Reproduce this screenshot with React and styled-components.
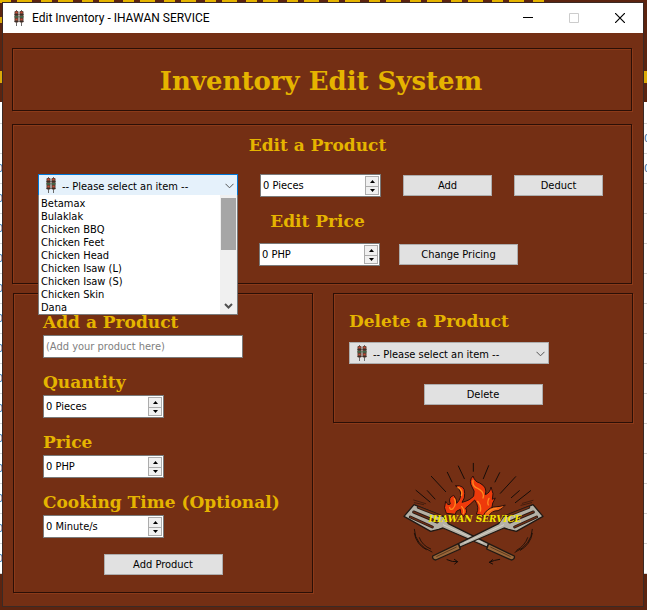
import React, { useState } from "react";
import styled, { createGlobalStyle, css } from "styled-components";

const uiFont = `Tahoma, "DejaVu Sans Condensed", "DejaVu Sans", sans-serif`;
const slabFont = `Rockwell, "DejaVu Serif", serif`;

const Global = createGlobalStyle`
  *, *::before, *::after { box-sizing: border-box; }
  body { margin: 0; background: #5c2410; font-family: ${uiFont}; font-size: 11px; color: #000; }
`;

const Desktop = styled.div`
  position: relative;
  min-height: 100vh;
  padding: 2px 3px 3px 2px;
  overflow: hidden;
`;

const Backdrop = styled.div`
  position: absolute;
  inset: 0;
`;

const BackdropHeader = styled.div`
  height: 102px;
  display: flex;
  flex-direction: column;
`;

const BackdropBanner = styled.div`
  height: 3px;
  margin-right: 100px;
  background: repeating-linear-gradient(90deg, #e5b400 0 11px, #5c2410 11px 17px, #e5b400 17px 32px, #5c2410 32px 41px);
`;

const BackdropMarks = styled.div`
  display: flex;
  justify-content: space-between;
  height: ${(p) => p.$h}px;
  margin-top: ${(p) => p.$gap}px;
`;

const BackdropMark = styled.span`
  width: 3px;
  background: #dba908;
`;

const BackdropRow = styled.div`
  display: flex;
  justify-content: space-between;
  height: ${(p) => (p.$tall ? 22 : 30)}px;
  background: #fff;
  border-bottom: 1px solid #d4d4d4;
  line-height: 30px;
  color: #3c6e9c;
`;

const BackdropCell = styled.span`
  width: 3px;
  overflow: hidden;
  display: flex;
  justify-content: ${(p) => (p.$end ? "flex-end" : "flex-start")};
`;

const Window = styled.main`
  position: relative;
  border: 1px solid #3b2a25;
  background: #742f14;
`;

const TitleBar = styled.header`
  display: flex;
  align-items: center;
  height: 30px;
  padding-left: 10px;
  background: #fff;
`;

const WindowTitle = styled.h1`
  flex: 1;
  margin: 0 0 0 7px;
  font: 400 12px/16px "Segoe UI", Roboto, sans-serif;
`;

const CaptionButton = styled.button`
  display: grid;
  place-items: center;
  width: 46px;
  height: 30px;
  padding: 0;
  border: 0;
  background: none;
  color: ${(p) => (p.disabled ? "#ccc" : "#000")};
`;

const Body = styled.div`
  padding: 15px 11px 13px 9px;
`;

const Group = styled.section`
  border: 1px solid #2b0f06;
  box-shadow: 1px 1px 0 #8b3a19, inset 1px 1px 0 #8b3a19;
`;

const Banner = styled(Group)`
  padding: 15px 14px 12px;
`;

const BannerTitle = styled.h2`
  margin: 0;
  padding-right: 2px;
  font: 700 26px/34px ${slabFont};
  color: #e5b400;
  text-align: center;
`;

const EditGroup = styled(Group)`
  margin-top: 13px;
  padding: 10px 10px 17px 25px;
`;

const heading = css`
  display: block;
  margin: 0;
  font: 700 17px/20px ${slabFont};
  color: #e5b400;
`;

const GroupTitle = styled.h3`
  ${heading}
`;

const CenteredTitle = styled(GroupTitle)`
  padding-right: 24px;
  text-align: center;
`;

const ControlRow = styled.div`
  display: flex;
  align-items: center;
  gap: 22px;
  margin: 19px 0 14px;
`;

const PriceRow = styled.div`
  display: flex;
  align-items: center;
  gap: 19px;
  margin-top: 12px;
  padding-left: 221px;
`;

const Columns = styled.div`
  display: grid;
  grid-template-columns: 1fr 1fr;
  gap: 20px;
  margin: 9px -1px 0 1px;
`;

const AddGroup = styled(Group)`
  display: flex;
  flex-direction: column;
  gap: 13px;
  padding: 17px 29px;
`;

const Field = styled.div`
  display: flex;
  flex-direction: column;
  gap: 2px;
`;

const FieldLabel = styled.label`
  ${heading}
  line-height: 22px;
  white-space: nowrap;
`;

const TextInput = styled.input`
  width: 200px;
  height: 23px;
  padding: 0 2px;
  border: 1px solid #7a7a7a;
  background: #fff;
  font: 11px ${uiFont};
  &::placeholder { color: #808080; opacity: 1; }
`;

const PushButton = styled.button`
  width: ${(p) => (p.$wide ? 119 : 89)}px;
  height: 21px;
  padding: 0;
  border: 1px solid #adadad;
  background: #e1e1e1;
  font: 11px ${uiFont};
  color: #000;
`;

const CenteredButton = styled(PushButton)`
  align-self: center;
  margin-top: ${(p) => p.$gap}px;
`;

const SpinFrame = styled.div`
  display: flex;
  width: 121px;
  height: 23px;
  padding: 1px;
  border: 1px solid #7a7a7a;
  background: #fff;
`;

const SpinInput = styled.input`
  flex: 1;
  min-width: 0;
  padding: 0 1px;
  border: 0;
  background: none;
  font: 11px ${uiFont};
`;

const SpinButtons = styled.div`
  display: grid;
  grid-template-rows: 1fr 1fr;
  width: 14px;
  border: 1px solid #acacac;
`;

const SpinButton = styled.button`
  display: grid;
  place-items: center;
  min-height: 0;
  padding: 0;
  border: 0;
  background: #f0f0f0;
  & + & { border-top: 1px solid #acacac; }
`;

const Combo = styled.div`
  position: relative;
  align-self: flex-start;
  width: 200px;
  height: 22px;
`;

const ComboSelect = styled.select`
  appearance: none;
  width: 100%;
  height: 100%;
  padding: 2px 20px 0 23px;
  border: 1px solid ${(p) => (p.$open ? "#0078d7" : "#adadad")};
  border-radius: 0;
  background: ${(p) => (p.$open ? "#e5f1fb" : "#e1e1e1")};
  font: 11px ${uiFont};
  color: #000;
`;

const ComboIcon = styled.span`
  position: absolute;
  top: 3px;
  left: 7px;
  display: flex;
  pointer-events: none;
`;

const ComboArrow = styled.svg`
  position: absolute;
  top: 9px;
  right: 4px;
  pointer-events: none;
`;

const Popup = styled.div`
  position: absolute;
  z-index: 2;
  top: 21px;
  left: 0;
  right: 0;
  display: flex;
  border: 1px solid #7a7a7a;
  border-top: 0;
  background: #fff;
`;

const Options = styled.ul`
  flex: 1;
  margin: 0;
  padding: 2px 2px 0;
  list-style: none;
`;

const Option = styled.li`
  line-height: 13px;
`;

const ScrollTrack = styled.div`
  display: flex;
  flex-direction: column;
  justify-content: space-between;
  align-items: center;
  width: 17px;
  padding: 3px 1px 5px;
  background: #f0f0f0;
`;

const ScrollThumb = styled.div`
  width: 15px;
  height: 52px;
  background: #a6a6a6;
`;

const SideColumn = styled.div`
  display: flex;
  flex-direction: column;
`;

const DeleteGroup = styled(Group)`
  display: flex;
  flex-direction: column;
  gap: 11px;
  padding: 17px 15px;
`;

const LogoHolder = styled.div`
  display: flex;
  justify-content: center;
  padding: 27px 20px 0 0;
`;

const SkewerIcon = () => (
  <svg width="12" height="17" viewBox="0 0 12 17" aria-hidden="true">
    {[3, 8].map((x) => (
      <g key={x}>
        <path d={`M${x + 0.5} 0V16`} stroke="#6b6b6b" strokeWidth="1" />
        <rect x={x - 1.5} y="1" width="4" height="11.500" rx="1" fill="#5c4034" />
        <path d={`M${x - 0.5} 2.500h2M${x - 0.5} 9.500h2`} stroke="#cf4a35" strokeWidth="1.5" />
        <path d={`M${x - 1.5} 4.500h4M${x - 1.5} 11.500h4`} stroke="#3a2d28" strokeWidth="1" />
        <path d={`M${x - 1.5} 6.800h4`} stroke="#3f6b4c" strokeWidth="1.500" />
      </g>
    ))}
  </svg>
);

function SpinBox({ id, label, unit }) {
  const [value, setValue] = useState(0);
  return (
    <SpinFrame>
      <SpinInput id={id} aria-label={label} value={`${value} ${unit}`} readOnly />
      <SpinButtons>
        <SpinButton type="button" aria-label="Increase" onClick={() => setValue(value + 1)}>
          <svg width="5" height="3" viewBox="0 0 5 3"><path d="M0 3L2.5 0L5 3Z" /></svg>
        </SpinButton>
        <SpinButton type="button" aria-label="Decrease" onClick={() => setValue(Math.max(0, value - 1))}>
          <svg width="5" height="3" viewBox="0 0 5 3"><path d="M0 0L2.5 3L5 0Z" /></svg>
        </SpinButton>
      </SpinButtons>
    </SpinFrame>
  );
}

const items = [
  "Betamax", "Bulaklak", "Chicken BBQ", "Chicken Feet", "Chicken Head",
  "Chicken Isaw (L)", "Chicken Isaw (S)", "Chicken Skin", "Dana",
];

function ItemCombo({ label, open }) {
  return (
    <Combo>
      <ComboSelect aria-label={label} $open={open}>
        <option>-- Please select an item --</option>
      </ComboSelect>
      <ComboIcon><SkewerIcon /></ComboIcon>
      <ComboArrow width="9" height="6" viewBox="0 0 9 6" fill="none" stroke="#555">
        <path d="M0.5 0.8L4.5 4.8L8.5 0.8" />
      </ComboArrow>
      {open && (
        <Popup>
          <Options role="listbox" aria-label="Items">
            {items.map((name) => <Option key={name} role="option">{name}</Option>)}
          </Options>
          <ScrollTrack>
            <ScrollThumb />
            <svg width="9" height="6" viewBox="0 0 9 6" fill="none" stroke="#505050" strokeWidth="2">
              <path d="M1 1L4.5 4.5L8 1" />
            </svg>
          </ScrollTrack>
        </Popup>
      )}
    </Combo>
  );
}

const Spatula = () => (
  <g strokeLinejoin="round">
    <path d="M63 164L33 199L113 244L137 238L150 234L282 291L287 281L166 221L152 200Z" fill="#b5b1a6" stroke="#211914" strokeWidth="4" />
    <path d="M76 172L139 197M62 186L133 216M52 201L118 231" stroke="#2a1d17" strokeWidth="9" strokeLinecap="round" />
    <path d="M76 172L139 197M62 186L133 216M52 201L118 231" stroke="#742f14" strokeWidth="4" strokeLinecap="round" />
    <path d="M150 224L270 279" stroke="#e0ddd3" strokeWidth="2" />
    <path d="M287 281L364 318Q366 328 355 330L281 297Z" fill="#99673a" stroke="#211914" strokeWidth="4" />
    <path d="M292 291L353 320" stroke="#5f3a1d" strokeWidth="3" />
  </g>
);

const Logo = () => (
  <svg width="160" height="130" viewBox="0 0 480 390" fill="none" role="img" aria-label="Ihawan Service">
    <g stroke="#160d09" strokeWidth="3" strokeLinecap="round">
      <path d="M241 40V64M196 48L214 86M287 47L271 86M163 67L177 96M320 68L306 96M115 79L158 125M368 80L322 130M69 121L111 156M103 122L126 147M413 122L367 158M379 122L355 143" />
      <path d="M62 150L98 161M64 158L92 164M420 151L388 160M416 158L384 166" strokeWidth="1.5" />
      <path d="M64 238Q66 285 117 306M79 263Q87 286 113 297M418 238Q416 284 366 307M404 263Q396 287 371 301M64 250Q70 284 100 299M418 250Q412 284 382 301" strokeWidth="2.5" />
      <path d="M162 329Q178 337 194 335M184 328L194 335L185 342M320 328Q304 330 289 337M299 329L289 337L299 342" />
    </g>
    <Spatula />
    <g transform="translate(483 0) scale(-1 1)"><Spatula /></g>
    <g stroke="#2a100b" strokeWidth="3" strokeLinejoin="round">
      <path d="M160 190Q150 174 158 154Q164 168 172 162Q164 142 182 136Q192 146 191 160Q207 143 202 126Q199 113 187 107Q216 104 215 130Q217 144 207 157Q232 151 242 138Q247 122 237 111Q226 93 240 78Q246 96 260 99Q284 111 277 134Q292 128 294 111Q304 132 298 148L307 144Q297 158 296 176Q285 194 271 197L250 192Q261 172 245 150Q231 164 218 174Q226 188 211 199Q200 190 202 178L190 184L187 193Z" fill="#ee3a0b" />
      <path d="M271 197Q281 176 302 171Q323 170 337 165Q328 177 315 182Q297 181 286 199Z" fill="#f4671b" />
    </g>
    <path d="M240 91Q237 110 254 115Q276 126 270 144M254 154Q266 167 262 183M195 112Q211 121 205 137M184 146Q192 162 180 176Q171 182 170 172M206 170Q216 181 211 191M284 187Q295 176 310 175M288 145Q282 156 286 165" stroke="#ff8a20" strokeWidth="4" strokeLinecap="round" />
    <text x="246" y="215" textAnchor="middle" fill="#f4e500" fontFamily="DejaVu Serif, serif" fontSize="27" fontStyle="italic" fontWeight="700">IHAWAN SERVICE</text>
  </svg>
);

const backdropRows = Array.from({ length: 15 }, (_, i) => i);

export default function App() {
  return (
    <>
      <Global />
      <Desktop>
        <Backdrop aria-hidden="true">
          <BackdropHeader>
            <BackdropBanner />
            <BackdropMarks $gap={14} $h={6}>
              <BackdropMark />
            </BackdropMarks>
            <BackdropMarks $gap={48} $h={12}>
              <BackdropMark />
              <BackdropMark />
            </BackdropMarks>
          </BackdropHeader>
          <BackdropRow $tall />
          {backdropRows.map((i) => (
            <BackdropRow key={i}>
              <BackdropCell $end>{i > 0 ? "0" : ""}</BackdropCell>
              <BackdropCell>{i < 2 ? "0" : ""}</BackdropCell>
            </BackdropRow>
          ))}
        </Backdrop>
        <Window>
          <TitleBar>
            <SkewerIcon />
            <WindowTitle>Edit Inventory - IHAWAN SERVICE</WindowTitle>
            <CaptionButton aria-label="Minimize">
              <svg width="10" height="10"><path d="M0 4.5H10" stroke="currentColor" /></svg>
            </CaptionButton>
            <CaptionButton aria-label="Maximize" disabled>
              <svg width="10" height="10"><path d="M.5 .5H9.500V9.500H.5Z" stroke="currentColor" fill="none" /></svg>
            </CaptionButton>
            <CaptionButton aria-label="Close">
              <svg width="10" height="10"><path d="M0 0L10 10M10 0L0 10" stroke="currentColor" strokeWidth="1.2" /></svg>
            </CaptionButton>
          </TitleBar>
          <Body>
            <Banner>
              <BannerTitle>Inventory Edit System</BannerTitle>
            </Banner>
            <EditGroup>
              <CenteredTitle>Edit a Product</CenteredTitle>
              <ControlRow>
                <ItemCombo label="Product to edit" open />
                <SpinBox label="Pieces" unit="Pieces" />
                <PushButton>Add</PushButton>
                <PushButton>Deduct</PushButton>
              </ControlRow>
              <CenteredTitle>Edit Price</CenteredTitle>
              <PriceRow>
                <SpinBox label="New price" unit="PHP" />
                <PushButton $wide>Change Pricing</PushButton>
              </PriceRow>
            </EditGroup>
            <Columns>
              <AddGroup>
                <Field>
                  <FieldLabel htmlFor="product">Add a Product</FieldLabel>
                  <TextInput id="product" placeholder="(Add your product here)" />
                </Field>
                <Field>
                  <FieldLabel htmlFor="quantity">Quantity</FieldLabel>
                  <SpinBox id="quantity" unit="Pieces" />
                </Field>
                <Field>
                  <FieldLabel htmlFor="price">Price</FieldLabel>
                  <SpinBox id="price" unit="PHP" />
                </Field>
                <Field>
                  <FieldLabel htmlFor="cooking">Cooking Time (Optional)</FieldLabel>
                  <SpinBox id="cooking" unit="Minute/s" />
                </Field>
                <CenteredButton $wide $gap={3}>Add Product</CenteredButton>
              </AddGroup>
              <SideColumn>
                <DeleteGroup>
                  <GroupTitle>Delete a Product</GroupTitle>
                  <ItemCombo label="Product to delete" />
                  <CenteredButton $wide $gap={9}>Delete</CenteredButton>
                </DeleteGroup>
                <LogoHolder><Logo /></LogoHolder>
              </SideColumn>
            </Columns>
          </Body>
        </Window>
      </Desktop>
    </>
  );
}
